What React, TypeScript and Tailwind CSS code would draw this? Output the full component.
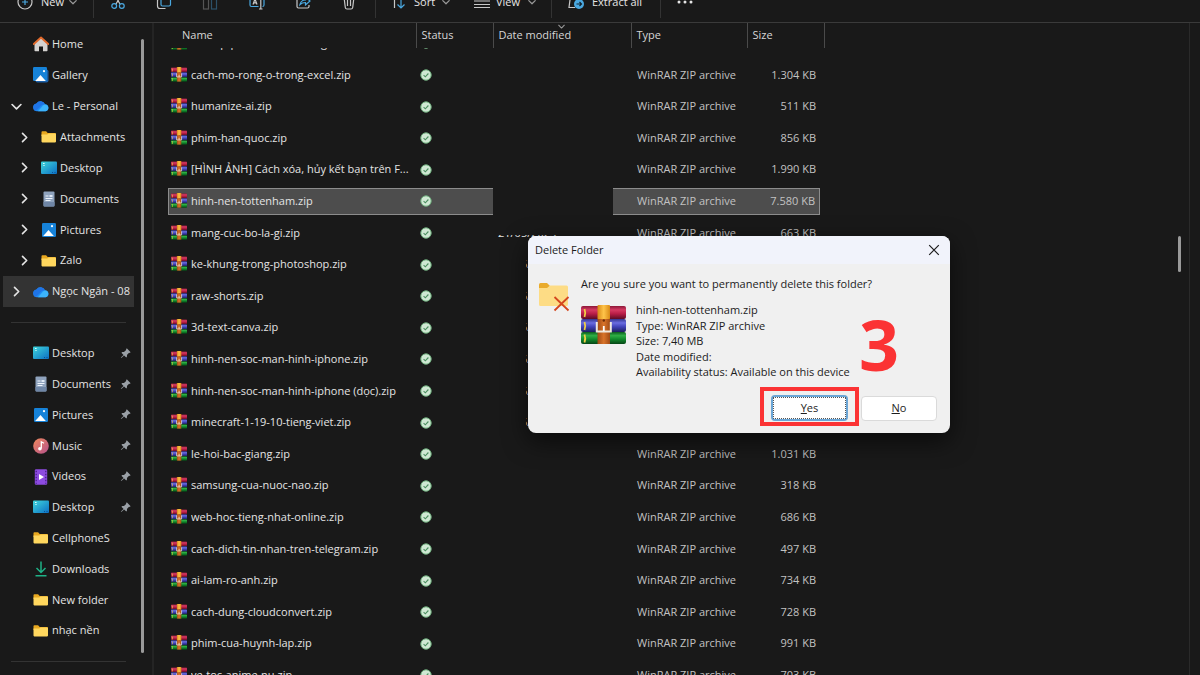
import type { ReactNode } from "react";
import { BsPinAngleFill } from "react-icons/bs";

/* ---------- icons ---------- */

function Chevron({ dir, className }: { dir: "right" | "down"; className?: string }) {
  return (
    <svg viewBox="0 0 10 10" className={className} fill="none" stroke="currentColor" strokeWidth="1.5" strokeLinecap="round" strokeLinejoin="round" aria-hidden="true">
      <path d={dir === "right" ? "M3.2 1.2 7 5 3.2 8.8" : "M1 3.2 5 7.2 9 3.2"} />
    </svg>
  );
}

function WinrarIcon({ className }: { className?: string }) {
  return (
    <svg viewBox="0 0 45 40" preserveAspectRatio="none" className={className} aria-hidden="true">
      <defs>
        <linearGradient id="wr" x1="0" y1="0" x2="0" y2="1">
          <stop offset="0" stopColor="#8c1838" />
          <stop offset=".3" stopColor="#d63a62" />
          <stop offset=".6" stopColor="#b81d46" />
          <stop offset="1" stopColor="#5c0c24" />
        </linearGradient>
        <linearGradient id="wb" x1="0" y1="0" x2="0" y2="1">
          <stop offset="0" stopColor="#33358f" />
          <stop offset=".3" stopColor="#6a6ce0" />
          <stop offset=".6" stopColor="#4042b8" />
          <stop offset="1" stopColor="#1e205f" />
        </linearGradient>
        <linearGradient id="wg" x1="0" y1="0" x2="0" y2="1">
          <stop offset="0" stopColor="#0b5c1e" />
          <stop offset=".3" stopColor="#2fae45" />
          <stop offset=".6" stopColor="#118a2c" />
          <stop offset="1" stopColor="#064516" />
        </linearGradient>
        <linearGradient id="belt" x1="0" y1="0" x2="1" y2="0">
          <stop offset="0" stopColor="#a04a14" />
          <stop offset=".5" stopColor="#d9742a" />
          <stop offset="1" stopColor="#a04a14" />
        </linearGradient>
        <linearGradient id="strap" x1="0" y1="0" x2="1" y2="0">
          <stop offset="0" stopColor="#d98a16" />
          <stop offset=".5" stopColor="#ffc44a" />
          <stop offset="1" stopColor="#d98a16" />
        </linearGradient>
      </defs>
      <rect x="0" y="1" width="45" height="13" rx="2" fill="url(#wr)" />
      <rect x="0" y="14" width="45" height="13" rx="2" fill="url(#wb)" />
      <rect x="0" y="27" width="45" height="12" rx="2" fill="url(#wg)" />
      <path d="M3.500 4q1.500 4 0 8M3.500 17q1.500 4 0 8M3.500 29.500q1.500 4 0 8" fill="none" stroke="#f0cf45" strokeWidth="1.800" />
      <rect x="16.500" y="13" width="12.500" height="26" fill="url(#belt)" />
      <rect x="16.500" y="0" width="12.500" height="14" rx="1" fill="url(#strap)" />
      <path d="M15.800 17v9.500h14V17" fill="none" stroke="#efe9df" strokeWidth="2" />
      <path d="M22.800 21v5" stroke="#fff" strokeWidth="1.800" />
      <circle cx="22.800" cy="15.500" r="1.200" fill="#6a2c08" />
    </svg>
  );
}

function SyncedIcon() {
  return (
    <svg viewBox="0 0 12 12" className="size-3 shrink-0" role="img" aria-label="Available on this device">
      <circle cx="6" cy="6" r="5.200" fill="#cfe8d3" stroke="#6fae7d" strokeWidth="1" />
      <path d="M3.600 6.200 5.300 7.800 8.400 4.500" fill="none" stroke="#4c8f60" strokeWidth="1.100" />
    </svg>
  );
}

function FolderIcon() {
  return (
    <svg viewBox="0 0 16 16" className="size-4" aria-hidden="true">
      <path d="M.5 3.200q0-.9.9-.9h3.700l1.600 1.600H14q1 0 1 1V7H.5z" fill="#e8a820" />
      <path d="M.5 5.600h5.700l1.400-1H14.200q.8 0 .8.800V12.600q0 .8-.8.8H1.300q-.8 0-.8-.8z" fill="#ffd75e" />
    </svg>
  );
}

function DesktopIcon() {
  return (
    <svg viewBox="0 0 16 16" className="size-4" aria-hidden="true">
      <defs>
        <linearGradient id="dk" x1="0" y1="0" x2="1" y2="1">
          <stop offset="0" stopColor="#3fd6dc" />
          <stop offset="1" stopColor="#0c6fc4" />
        </linearGradient>
      </defs>
      <rect x="0" y="1.600" width="16" height="12.400" rx="1" fill="url(#dk)" />
      <path d="M2 3.500h1.600M2.400 5.500h1.200" stroke="#d9ffff" strokeWidth="1" />
      <path d="M11 12.500h1M13.500 12.500h1" stroke="#0a4f96" strokeWidth="1" />
    </svg>
  );
}

function DocumentIcon() {
  return (
    <svg viewBox="0 0 16 16" className="size-4" aria-hidden="true">
      <rect x="2.500" y=".5" width="11" height="15" rx="1" fill="#8fa3bd" />
      <path d="M2.500 11h11v3.500q0 1-1 1h-9q-1 0-1-1z" fill="#6f86a6" />
      <path d="M4.500 5h3M4.500 7.500h7M4.500 9.500h5" stroke="#eef4fb" strokeWidth="1.100" />
      <rect x="8.500" y="4" width="3" height="2" fill="#dfe9f5" />
    </svg>
  );
}

function PicturesIcon({ stacked = false }: { stacked?: boolean }) {
  return (
    <svg viewBox="0 0 16 16" className="size-4" aria-hidden="true">
      {stacked && <rect x="2.500" y="2.500" width="13" height="13" rx="2" fill="#1a5fa8" />}
      <rect x={stacked ? "0" : "1"} y={stacked ? "0" : "1"} width="14" height="14" rx="1.200" fill="#1682d8" />
      <path d="M2.200 14 7.500 8l5.300 6z" fill="#fff" />
      <circle cx="11" cy="4.200" r="1.100" fill="#fff" />
    </svg>
  );
}

function CloudIcon() {
  return (
    <svg viewBox="0 0 16 16" className="size-4" aria-hidden="true">
      <path d="M4 13.300a4 4 0 0 1-.5-7.900A4.800 4.800 0 0 1 12 6.200a3.600 3.600 0 0 1 .6 7.100z" fill="#1f8df5" />
      <path d="M3.500 5.400A4.800 4.800 0 0 1 12 6.200Q8 6.500 6.500 9.500L2.500 13A4 4 0 0 1 3.500 5.400z" fill="#1f74e6" />
      <path d="M5 13.300 10 7.500Q12.500 5.500 14.500 7.500A3.600 3.600 0 0 1 12.600 13.300z" fill="#3cb4fb" />
    </svg>
  );
}

function HomeIcon() {
  return (
    <svg viewBox="0 0 16 16" className="size-4" aria-hidden="true">
      <path d="M1.500 7 8 1.500 14.500 7V14.500q0 .7-.7.700H10V10.500H6v4.700H2.200q-.7 0-.7-.7z" fill="#d4d2d0" />
      <path d="M.8 8 8 1.500 15.200 8" fill="none" stroke="#e0692b" strokeWidth="1.900" strokeLinecap="round" strokeLinejoin="round" />
    </svg>
  );
}

function MusicIcon() {
  return (
    <svg viewBox="0 0 16 16" className="size-4" aria-hidden="true">
      <defs>
        <linearGradient id="mu" x1="0" y1="0" x2="1" y2="1">
          <stop offset="0" stopColor="#f08a5c" />
          <stop offset="1" stopColor="#b4508c" />
        </linearGradient>
      </defs>
      <circle cx="8" cy="8" r="7.800" fill="url(#mu)" />
      <path d="M8.300 10.500V3.800L11 5.300" fill="none" stroke="#fff" strokeWidth="1.300" />
      <circle cx="6.900" cy="10.700" r="1.800" fill="#fff" />
    </svg>
  );
}

function VideosIcon() {
  return (
    <svg viewBox="0 0 16 16" className="size-4" aria-hidden="true">
      <rect x="1.800" y=".3" width="12.400" height="15.400" rx="1.300" fill="#8d4be0" />
      <path d="M3.200 1.800v13M12.800 1.800v13" stroke="#4a1f8c" strokeWidth="1.300" strokeDasharray="1.500 1.500" />
      <path d="M6 5v6l5-3z" fill="#fff" />
    </svg>
  );
}

function DownloadsIcon() {
  return (
    <svg viewBox="0 0 16 16" className="size-4" fill="none" stroke="#1fb287" strokeWidth="1.500" aria-hidden="true">
      <path d="M8 .5v10.500M3.500 7 8 11.500 12.500 7M2.500 14.800h11" />
    </svg>
  );
}

/* ---------- command bar ---------- */

function BarIcon({ children }: { children: ReactNode }) {
  return (
    <svg viewBox="0 0 16 16" className="size-4 shrink-0" fill="none" stroke="#c8c8c8" strokeWidth="1.200" aria-hidden="true">
      {children}
    </svg>
  );
}

const BLUE = "#4aa8e0";

function Separator() {
  return <span className="h-8 w-px bg-[#333333]" />;
}

function CommandBar() {
  return (
    <header className="flex h-[23px] shrink-0 items-end overflow-hidden border-b border-[#3a3a3a]">
      <div className="flex h-10 shrink-0 items-center font-medium text-[#e6e6e6]">
        <button className="flex w-[93px] items-center pl-[17px]">
          <BarIcon>
            <circle cx="8" cy="8" r="7" />
            <path d="M8 5v6M5 8h6" stroke={BLUE} />
          </BarIcon>
          <span className="ml-2 w-7 text-left">New</span>
          <Chevron dir="down" className="size-2 text-[#9a9a9a]" />
        </button>
        <Separator />
        <div className="flex w-[281px] items-center justify-between pr-[18px] pl-4">
          <button aria-label="Cut">
            <BarIcon>
              <path d="M4 0 10 10M12 0 6 10" />
              <circle cx="4.200" cy="12" r="2.400" stroke={BLUE} />
              <circle cx="11.800" cy="12" r="2.400" stroke={BLUE} />
            </BarIcon>
          </button>
          <button aria-label="Copy">
            <BarIcon>
              <path d="M3 5.500H2.500Q1.500 5.500 1.500 6.500V12Q1.500 14.500 4 14.500H9.500" />
              <rect x="5" y="1" width="9.500" height="11" rx="1.500" stroke={BLUE} />
            </BarIcon>
          </button>
          <button aria-label="Paste">
            <BarIcon>
              <rect x="1.500" y="1" width="5" height="14" stroke="#555" />
              <rect x="9.500" y="1" width="5" height="14" stroke="#2c5068" />
            </BarIcon>
          </button>
          <button aria-label="Rename">
            <BarIcon>
              <path d="M9.500 2.500H2.500Q1 2.500 1 4v7q0 1.500 1.500 1.500h7M13.500 3.500Q15 4 15 5v6q0 1.500-1.500 1.500" stroke={BLUE} />
              <path d="M10 .8h3.500M11.800 .8V15M10 15h3.500M4 10.500 6 5l2 5.500M4.800 8.800h2.600" />
            </BarIcon>
          </button>
          <button aria-label="Share">
            <BarIcon>
              <path d="M5 3H3.500Q2 3 2 4.500v8Q2 14 3.500 14h9Q14 14 14 12.500V11" />
              <path d="M5 10.500Q6 6 10.500 6V3L15 7l-4.500 4V8.500Q7 8.500 5 10.500z" stroke={BLUE} />
            </BarIcon>
          </button>
          <button aria-label="Delete">
            <BarIcon>
              <path d="M1.500 3h13M3 3 4.300 13.500Q4.500 15 6 15h4q1.500 0 1.700-1.500L13 3M6.500 6v6M9.500 6v6" />
            </BarIcon>
          </button>
        </div>
        <Separator />
        <button className="flex w-20 items-center pl-[14px]">
          <BarIcon>
            <path d="M4.500 14V2M1.500 5 4.500 2l3 3" />
            <path d="M11 2v12M7.500 10.500 11 14l3.500-3.500" stroke={BLUE} />
          </BarIcon>
          <span className="ml-2 w-7 text-left">Sort</span>
          <Chevron dir="down" className="size-2 text-[#9a9a9a]" />
        </button>
        <button className="flex w-[95px] items-center pl-[18px]">
          <BarIcon>
            <path d="M0 3.500h16M0 7h16M0 10.500h16M0 13.500h16" strokeWidth="1" />
          </BarIcon>
          <span className="ml-[6px] w-8 text-left">View</span>
          <Chevron dir="down" className="size-2 text-[#9a9a9a]" />
        </button>
        <Separator />
        <button className="flex w-[108px] items-center gap-2 pl-4 whitespace-nowrap">
          <BarIcon>
            <path d="M2.500 2 1 13.500h6" />
            <circle cx="11" cy="10" r="5" fill={BLUE} stroke="none" />
            <path d="M8.500 10h5M11.500 8l2 2-2 2" stroke="#10222e" />
          </BarIcon>
          Extract all
        </button>
        <Separator />
        <button className="pl-4" aria-label="See more">
          <svg viewBox="0 0 16 4" className="h-1 w-4" fill="#e6e6e6" aria-hidden="true">
            <circle cx="2" cy="2" r="1.500" />
            <circle cx="8" cy="2" r="1.500" />
            <circle cx="14" cy="2" r="1.500" />
          </svg>
        </button>
      </div>
    </header>
  );
}

/* ---------- navigation pane ---------- */

type NavItem = { label: string; icon: ReactNode; open?: boolean; closed?: boolean; child?: boolean; pinned?: boolean; selected?: boolean };

const treeItems: NavItem[] = [
  { label: "Home", icon: <HomeIcon /> },
  { label: "Gallery", icon: <PicturesIcon stacked /> },
  { label: "Le - Personal", icon: <CloudIcon />, open: true },
  { label: "Attachments", icon: <FolderIcon />, closed: true, child: true },
  { label: "Desktop", icon: <DesktopIcon />, closed: true, child: true },
  { label: "Documents", icon: <DocumentIcon />, closed: true, child: true },
  { label: "Pictures", icon: <PicturesIcon />, closed: true, child: true },
  { label: "Zalo", icon: <FolderIcon />, closed: true, child: true },
  { label: "Ngọc Ngân - 08", icon: <CloudIcon />, closed: true, selected: true },
];

const quickItems: NavItem[] = [
  { label: "Desktop", icon: <DesktopIcon />, pinned: true },
  { label: "Documents", icon: <DocumentIcon />, pinned: true },
  { label: "Pictures", icon: <PicturesIcon />, pinned: true },
  { label: "Music", icon: <MusicIcon />, pinned: true },
  { label: "Videos", icon: <VideosIcon />, pinned: true },
  { label: "Desktop", icon: <DesktopIcon />, pinned: true },
  { label: "CellphoneS", icon: <FolderIcon /> },
  { label: "Downloads", icon: <DownloadsIcon /> },
  { label: "New folder", icon: <FolderIcon /> },
  { label: "nhạc nền", icon: <FolderIcon /> },
];

function NavRow({ item }: { item: NavItem }) {
  return (
    <li className={item.selected ? "bg-[#333333]" : ""}>
      <a href="#" className={`flex h-full items-center overflow-hidden ${item.child ? "pl-4" : "pl-2"}`}>
        <span className="flex w-[22px] shrink-0">
          {item.open && <Chevron dir="down" className="size-[11px]" />}
          {item.closed && <Chevron dir="right" className="size-[11px]" />}
        </span>
        <span className="shrink-0">{item.icon}</span>
        <span className="ml-[3px] grow whitespace-nowrap">{item.label}</span>
        {item.pinned && <BsPinAngleFill className="mr-[3px] size-[11px] shrink-0 text-[#9aa0a6]" />}
      </a>
    </li>
  );
}

function Sidebar() {
  return (
    <aside className="flex w-[154px] shrink-0 border-r-2 border-[#242424]">
      <nav className="ml-[3px] w-[131px] pt-[6px]">
        <ul className="grid h-[278px] auto-rows-fr grid-cols-1">
          {treeItems.map((item, i) => (
            <NavRow key={i} item={item} />
          ))}
        </ul>
        <hr className="mx-2 my-[15px] border-[#333333]" />
        <ul className="grid h-[308px] auto-rows-fr grid-cols-1">
          {quickItems.map((item, i) => (
            <NavRow key={i} item={item} />
          ))}
        </ul>
        <hr className="mx-2 my-[15px] border-[#333333]" />
      </nav>
      <div className="mt-4 ml-[7px] h-[614px] w-[3px] rounded-full bg-[#9a9a9a]" />
    </aside>
  );
}

/* ---------- file list ---------- */

type FileRow = { name: string; size: string; date?: string; selected?: boolean };

const DATE = "21/05/2025";

const files: FileRow[] = [
  { name: "cach-mo-rong-o-trong-excel.zip", size: "1.304 KB" },
  { name: "humanize-ai.zip", size: "511 KB" },
  { name: "phim-han-quoc.zip", size: "856 KB" },
  { name: "[HÌNH ẢNH] Cách xóa, hủy kết bạn trên F...", size: "1.990 KB" },
  { name: "hinh-nen-tottenham.zip", size: "7.580 KB", selected: true },
  { name: "mang-cuc-bo-la-gi.zip", size: "663 KB", date: DATE },
  { name: "ke-khung-trong-photoshop.zip", size: "", date: DATE },
  { name: "raw-shorts.zip", size: "", date: DATE },
  { name: "3d-text-canva.zip", size: "", date: DATE },
  { name: "hinh-nen-soc-man-hinh-iphone.zip", size: "", date: DATE },
  { name: "hinh-nen-soc-man-hinh-iphone (dọc).zip", size: "", date: DATE },
  { name: "minecraft-1-19-10-tieng-viet.zip", size: "", date: DATE },
  { name: "le-hoi-bac-giang.zip", size: "1.031 KB" },
  { name: "samsung-cua-nuoc-nao.zip", size: "318 KB" },
  { name: "web-hoc-tieng-nhat-online.zip", size: "686 KB" },
  { name: "cach-dich-tin-nhan-tren-telegram.zip", size: "497 KB" },
  { name: "ai-lam-ro-anh.zip", size: "734 KB" },
  { name: "cach-dung-cloudconvert.zip", size: "728 KB" },
  { name: "phim-cua-huynh-lap.zip", size: "991 KB" },
  { name: "ve-toc-anime-nu.zip", size: "703 KB" },
];

function NameCell({ name }: { name: string }) {
  return (
    <>
      <WinrarIcon className="mb-[2px] h-[15px] w-4 shrink-0" />
      <span className="w-[219px] truncate">{name}</span>
    </>
  );
}

function FileTable() {
  const head = "border-r border-[#4a4a4a] p-0 pl-[5px] text-left font-normal";
  return (
    <table className="ml-[14px] w-[656px] table-fixed border-collapse">
      <colgroup>
        <col className="w-[248px]" />
        <col className="w-[77px]" />
        <col className="w-[138px]" />
        <col className="w-[116px]" />
        <col className="w-[77px]" />
      </colgroup>
      <thead className="text-[#d6d6d6]">
        <tr className="h-[25px]">
          <th className="border-r border-[#4a4a4a] p-0 pl-[14px] text-left font-normal">Name</th>
          <th className={head}>Status</th>
          <th className={`relative ${head}`}>
            Date modified
            <Chevron dir="down" className="absolute top-0 left-16 size-[7px] text-[#9a9a9a]" />
          </th>
          <th className={head}>Type</th>
          <th className={head}>Size</th>
        </tr>
      </thead>
      <tbody>
        <tr className="h-[11px]">
          <td className="p-0">
            <div className="flex h-[11px] items-end overflow-hidden">
              <div className="flex h-8 items-center gap-1 pl-[3px]">
                <NameCell name="bai-tap-phan-so-tieu-hoc-giua-nam-hoc-moi-hoan-toan-moi" />
              </div>
            </div>
          </td>
          <td className="p-0">
            <div className="flex h-[11px] items-end overflow-hidden">
              <div className="flex h-8 items-center pl-1">
                <SyncedIcon />
              </div>
            </div>
          </td>
          <td className="p-0">
            <div className="flex h-[11px] items-end overflow-hidden">
              <div className="flex h-8 items-center pl-[5px] whitespace-nowrap">{DATE}</div>
            </div>
          </td>
          <td />
          <td />
        </tr>
        {files.map((f, i) => {
          const band = f.selected ? "border-y border-[#8c8c8c] bg-[#4d4d4d]" : "";
          return (
            <tr key={f.name} className={i % 5 === 1 || i % 5 === 3 ? "h-[31px]" : "h-8"}>
              <td className="p-0">
                <div className={`flex h-[27px] items-center gap-1 pl-[3px] ${f.selected ? "border-y border-[#8c8c8c] bg-[#4d4d4d] shadow-[inset_1px_0_0_#8c8c8c]" : ""}`}>
                  <NameCell name={f.name} />
                </div>
              </td>
              <td className="p-0">
                <div className={`flex h-[27px] items-center pl-1 ${band}`}>
                  <SyncedIcon />
                </div>
              </td>
              <td className="p-0">
                <div className={`flex h-[27px] items-center pl-[5px] whitespace-nowrap ${band}`}>{f.date}</div>
              </td>
              <td className="p-0 text-[#c2c2c2]">
                <div className={`flex h-[27px] items-center pl-[6px] whitespace-nowrap ${band}`}>{f.size && "WinRAR ZIP archive"}</div>
              </td>
              <td className="p-0 text-[#c2c2c2]">
                <div className={`mr-1 flex h-[27px] items-center justify-end pr-1 whitespace-nowrap ${f.selected ? "border-y border-r border-[#8c8c8c] bg-[#4d4d4d]" : ""}`}>{f.size}</div>
              </td>
            </tr>
          );
        })}
      </tbody>
    </table>
  );
}

/* ---------- delete dialog ---------- */

function DeleteDialog() {
  return (
    <section role="dialog" aria-labelledby="dlg-title" className="absolute top-[213px] left-[374px] w-[422px] rounded-lg bg-[#f0f0f0] text-[#1c1c1c] shadow-[0_8px_24px_rgba(0,0,0,0.6)]">
      <div className="flex h-7 items-center justify-between rounded-t-lg bg-[#f1f3fb] pr-[10px] pl-[7px]">
        <h2 id="dlg-title">Delete Folder</h2>
        <button aria-label="Close">
          <svg viewBox="0 0 12 12" className="size-3" fill="none" stroke="#1c1c1c" strokeWidth="1.200" aria-hidden="true">
            <path d="M1.200 1.200 10.800 10.800M10.800 1.200 1.200 10.800" />
          </svg>
        </button>
      </div>
      <div className="flex pt-3 pl-[10px]">
        <svg viewBox="0 0 32 32" className="mt-1 size-8 shrink-0" aria-hidden="true">
          <path d="M1 4.500Q1 3 2.500 3H9l3 3-3 4H1z" fill="#e9ab2c" />
          <path d="M1 8h8l3-2.500H28.500q1.500 0 1.500 1.500V24.500q0 1.500-1.500 1.500h-26Q1 26 1 24.500z" fill="#fddc85" />
          <path d="M16.500 17 30.500 30.500M30.500 17 16.500 30.500" stroke="#d4461e" strokeWidth="1.800" />
        </svg>
        <div className="ml-[11px]">
          <p className="leading-4">Are you sure you want to permanently delete this folder?</p>
          <div className="mt-[10px] flex gap-[10px]">
            <WinrarIcon className="mt-[3px] h-10 w-[45px]" />
            <div className="grid h-[78px] auto-rows-fr leading-4">
              <p>hinh-nen-tottenham.zip</p>
              <p>Type: WinRAR ZIP archive</p>
              <p>Size: 7,40 MB</p>
              <p>Date modified:</p>
              <p>Availability status: Available on this device</p>
            </div>
          </div>
        </div>
      </div>
      <div className="mt-[7px] flex items-end justify-end gap-[2px] pr-[13px] pb-[7px]">
        <div className="border-4 border-[#fb3334] px-[7px] pt-1 pb-px">
          <button className="flex h-[26px] w-[77px] items-center justify-center rounded-sm border-2 border-[#6ba6d6] bg-white">
            <span className="flex h-full w-full items-center justify-center border border-dotted border-[#555555]">
              <span>
                <u>Y</u>es
              </span>
            </span>
          </button>
        </div>
        <button className="mb-[5px] h-[25px] w-[76px] rounded-sm border border-[#dadada] bg-white">
          <u>N</u>o
        </button>
      </div>
      <span className="absolute top-[72px] left-[331px] text-[70px] leading-[72px] font-bold text-[#fb3334]">3</span>
    </section>
  );
}

export default function App() {
  return (
    <div className="flex h-screen flex-col overflow-hidden bg-[#191919] font-['Open_Sans','Noto_Sans',sans-serif] text-[11px] text-[#e4e4e4]">
      <CommandBar />
      <div className="flex min-h-0 grow">
        <Sidebar />
        <main className="relative min-w-0 grow overflow-hidden">
          <FileTable />
          <div className="absolute top-[27px] left-[339px] h-[185px] w-[120px] bg-[#191919]" />
          <div className="absolute top-[215px] left-[339px] h-[205px] w-[33px] bg-[#191919]" />
          <div className="absolute top-[213px] right-2 h-9 w-[3px] rounded-full bg-[#9a9a9a]" />
          <DeleteDialog />
        </main>
        <div className="w-[11px] shrink-0 border-l border-[#2a2a2a]" />
      </div>
    </div>
  );
}
